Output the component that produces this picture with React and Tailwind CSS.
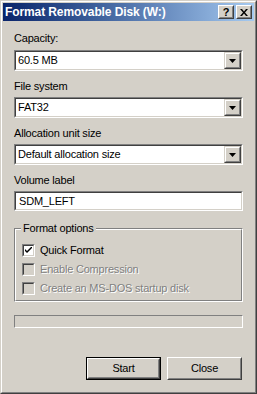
import React from "react";

const FONT = "font-['Liberation_Sans',Arial,sans-serif]";

function Sunken({ className = "", innerClass = "", children }) {
  return (
    <div className={"border border-t-[#808080] border-l-[#808080] border-r-white border-b-white " + className}>
      <div className={"h-full border border-t-[#404040] border-l-[#404040] border-r-[#d4d0c8] border-b-[#d4d0c8] " + innerClass}>
        {children}
      </div>
    </div>
  );
}

function Arrow() {
  return (
    <svg width="7" height="4" viewBox="0 0 7 4" className="block">
      <polygon points="0,0 7,0 3.5,4" fill="#000" />
    </svg>
  );
}

function Combo({ value }) {
  return (
    <Sunken className="h-[21px]" innerClass="bg-white flex items-stretch">
      <div className="flex-1 flex items-center pl-[2px] text-[11px] text-black">{value}</div>
      <div className="w-[17px] h-[17px] border border-t-[#d4d0c8] border-l-[#d4d0c8] border-r-[#404040] border-b-[#404040] bg-[#d4d0c8]">
        <div className="h-full border border-t-white border-l-white border-r-[#808080] border-b-[#808080] flex items-center justify-center">
          <Arrow />
        </div>
      </div>
    </Sunken>
  );
}

function Check({ checked, disabled, label }) {
  return (
    <div className="flex items-center h-[13px]">
      <Sunken className="w-[13px] h-[13px]" innerClass={disabled ? "bg-[#d4d0c8]" : "bg-white flex items-center justify-center"}>
        {checked && (
          <svg width="7" height="7" viewBox="0 0 7 7" className="block">
            <path d="M0 2 L0 4 L2 6 L7 1 L7 -1 L2 4 Z" fill="#000" />
          </svg>
        )}
      </Sunken>
      <span
        className={
          "ml-[5px] text-[11px] leading-[13px] " +
          (disabled ? "text-[#808080] [text-shadow:1px_1px_0_#fff]" : "text-black")
        }
      >
        {label}
      </span>
    </div>
  );
}

function TitleBtn({ children }) {
  return (
    <div className="w-[16px] h-[14px] border border-t-white border-l-white border-r-[#404040] border-b-[#404040] bg-[#d4d0c8]">
      <div className="h-full border border-t-[#d4d0c8] border-l-[#d4d0c8] border-r-[#808080] border-b-[#808080] flex items-center justify-center">
        {children}
      </div>
    </div>
  );
}

function Button({ label, isDefault }) {
  const body = (
    <div className="h-full border border-t-white border-l-white border-r-[#404040] border-b-[#404040]">
      <div className="h-full border border-t-[#d4d0c8] border-l-[#d4d0c8] border-r-[#808080] border-b-[#808080] flex items-center justify-center text-[11px] text-black">
        {label}
      </div>
    </div>
  );
  return (
    <div className={"w-[75px] h-[23px] bg-[#d4d0c8] " + (isDefault ? "border border-black" : "")}>
      {body}
    </div>
  );
}

export default function App() {
  return (
    <div className={"w-[257px] h-[394px] bg-[#d4d0c8] border border-t-[#d4d0c8] border-l-[#d4d0c8] border-r-[#404040] border-b-[#404040] tracking-[-0.2px] " + FONT}>
      <div className="h-full border border-t-white border-l-white border-r-[#808080] border-b-[#808080] p-px flex flex-col">
        <div className="h-[18px] bg-gradient-to-r from-[#0a246a] to-[#a6caf0] flex items-center pl-[2px] pr-[2px]">
          <span className="flex-1 text-white font-bold text-[12px] tracking-[-0.1px] leading-[18px]">
            Format Removable Disk (W:)
          </span>
          <TitleBtn>
            <span className="text-[11px] font-bold leading-none text-black">?</span>
          </TitleBtn>
          <div className="w-[2px]" />
          <TitleBtn>
            <svg width="8" height="7" viewBox="0 0 8 7" className="block">
              <path d="M0 0 H2 L4 2.5 L6 0 H8 L5 3.5 L8 7 H6 L4 4.5 L2 7 H0 L3 3.5 Z" fill="#000" />
            </svg>
          </TitleBtn>
        </div>

        <div className="flex flex-col px-[11px] text-[11px] text-black">
          <div className="mt-[11px] h-[13px] leading-[13px]">Capacity:</div>
          <div className="mt-[5px]"><Combo value="60.5 MB" /></div>

          <div className="mt-[9px] h-[13px] leading-[13px]">File system</div>
          <div className="mt-[4px]"><Combo value="FAT32" /></div>

          <div className="mt-[9px] h-[13px] leading-[13px]">Allocation unit size</div>
          <div className="mt-[4px]"><Combo value="Default allocation size" /></div>

          <div className="mt-[9px] h-[13px] leading-[13px]">Volume label</div>
          <div className="mt-[4px]">
            <Sunken className="h-[20px]" innerClass="bg-white flex items-center pl-[3px]">
              SDM_LEFT
            </Sunken>
          </div>

          <div className="relative mt-[17px] h-[74px] border border-t-[#808080] border-l-[#808080] border-r-white border-b-white">
            <div className="h-full border border-t-white border-l-white border-r-[#808080] border-b-[#808080] flex flex-col pl-[6px] pt-[14px] gap-[6px]">
              <Check checked label="Quick Format" />
              <Check disabled label="Enable Compression" />
              <Check disabled label="Create an MS-DOS startup disk" />
            </div>
            <span className="absolute left-[6px] top-[-7px] px-[2px] bg-[#d4d0c8] leading-[13px]">Format options</span>
          </div>

          <div className="mt-[13px] h-[13px] border border-t-[#808080] border-l-[#808080] border-r-white border-b-white" />

          <div className="mt-[29px] flex justify-end gap-[6px] pr-px">
            <Button label="Start" isDefault />
            <Button label="Close" />
          </div>
        </div>
      </div>
    </div>
  );
}
